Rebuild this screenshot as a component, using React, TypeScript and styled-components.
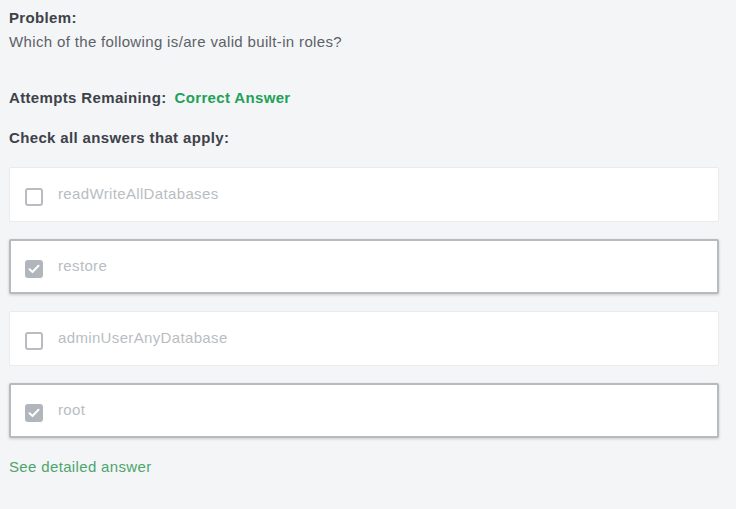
import React from "react";
import styled, { createGlobalStyle } from "styled-components";

const Global = createGlobalStyle`
  html, body { margin: 0; padding: 0; background: #f4f5f7; }
  body { font-family: "Liberation Sans", Arial, sans-serif; letter-spacing: 0.35px; }
`;

const Page = styled.div`
  padding: 9px 17px 20px 9px;
  display: flex;
  flex-direction: column;
`;

const Label = styled.div`
  font-size: 15px;
  font-weight: 700;
  color: #3d4249;
  line-height: 18px;
`;

const Question = styled.div`
  font-size: 15px;
  color: #5c6168;
  line-height: 18px;
  margin-top: 6px;
`;

const AttemptsRow = styled.div`
  display: flex;
  gap: 8px;
  margin-top: 38px;
  font-size: 15px;
  font-weight: 700;
  line-height: 18px;
  color: #3d4249;
`;

const Correct = styled.span`
  color: #22a157;
`;

const Instruction = styled(Label)`
  margin-top: 22px;
`;

const List = styled.div`
  display: flex;
  flex-direction: column;
  gap: 17px;
  margin-top: 20px;
`;

const Card = styled.div<{ $checked: boolean }>`
  box-sizing: border-box;
  height: 55px;
  background: #fff;
  border: ${(p) => (p.$checked ? "2px solid #b6bbc0" : "1px solid #e9ebed")};
  border-radius: 2px;
  box-shadow: ${(p) => (p.$checked ? "0 1px 3px rgba(0,0,0,0.18)" : "none")};
  display: flex;
  align-items: center;
  gap: 15px;
  padding-left: ${(p) => (p.$checked ? "14px" : "15px")};
  padding-bottom: 1px;
`;

const Box = styled.span<{ $checked: boolean }>`
  box-sizing: border-box;
  width: 18px;
  height: 18px;
  border-radius: 3px;
  border: 2px solid #b7bbbf;
  background: ${(p) => (p.$checked ? "#b1b6bc" : "#fff")};
  border-color: ${(p) => (p.$checked ? "#b1b6bc" : "#b9bdc1")};
  display: flex;
  align-items: center;
  justify-content: center;
  margin-top: 5px;
`;

const OptionText = styled.span`
  font-size: 15px;
  color: #b9bdc2;
  line-height: 18px;
`;

const Link = styled.a`
  margin-top: 20px;
  font-size: 15px;
  color: #4da56e;
  text-decoration: none;
  line-height: 18px;
`;

const options = [
  { text: "readWriteAllDatabases", checked: false },
  { text: "restore", checked: true },
  { text: "adminUserAnyDatabase", checked: false },
  { text: "root", checked: true },
];

export default function App() {
  return (
    <>
      <Global />
      <Page>
        <Label>Problem:</Label>
        <Question>Which of the following is/are valid built-in roles?</Question>
        <AttemptsRow>
          <span>Attempts Remaining:</span>
          <Correct>Correct Answer</Correct>
        </AttemptsRow>
        <Instruction>Check all answers that apply:</Instruction>
        <List>
          {options.map((o) => (
            <Card key={o.text} $checked={o.checked}>
              <Box $checked={o.checked}>
                {o.checked && (
                  <svg width="12" height="10" viewBox="0 0 12 10">
                    <path d="M1.5 5.2 L4.5 8 L10.5 1.8" fill="none" stroke="#fff" strokeWidth="2" strokeLinecap="round" strokeLinejoin="round" />
                  </svg>
                )}
              </Box>
              <OptionText>{o.text}</OptionText>
            </Card>
          ))}
        </List>
        <Link href="#">See detailed answer</Link>
      </Page>
    </>
  );
}
